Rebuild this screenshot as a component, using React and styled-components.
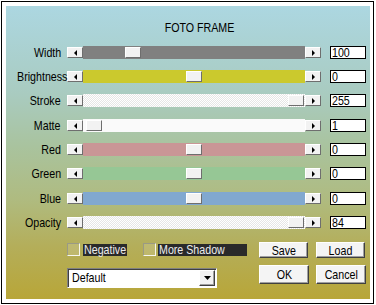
import React from 'react';
import styled, { createGlobalStyle } from 'styled-components';

const FONT = `"Liberation Sans", Arial, sans-serif`;

const Global = createGlobalStyle`
  html, body { margin: 0; padding: 0; background: #fff; }
  body { font-family: ${FONT}; }
`;

const Frame = styled.div`
  margin: 1px 0 0 1px;
  width: 373px;
  height: 303px;
  box-sizing: border-box;
  border: 1px solid #000;
  padding: 4px 3px 4px 4px;
  background: #fff;
`;

const Panel = styled.div`
  height: 100%;
  display: flex;
  flex-direction: column;
  font-family: ${FONT};
  font-size: 13px;
  color: #000;
  background: linear-gradient(
    to bottom,
    #acd7e1 0%,
    #a9cbc0 30%,
    #a9c39e 48%,
    #afbb80 66%,
    #b4ae5a 82%,
    #b8a638 100%
  );
`;

/* narrow MS-Sans-like text: regular face squeezed horizontally */
const Narrow = styled.span`
  display: inline-block;
  white-space: nowrap;
  transform: scaleX(0.82);
  transform-origin: ${p => p.$o || 'left'} center;
`;

const Title = styled.div`
  margin-top: 14px;
  height: 15px;
  line-height: 15px;
  text-align: center;
  padding-left: 23px;
`;

const Rows = styled.div`
  margin-top: 11px;
  display: grid;
  grid-template-columns: 55px 254px 36px;
  grid-template-rows: 24px 24px 25px 24px 24px 25px 24px 13px;
  column-gap: 6px;
  align-items: start;
`;

const Label = styled.div`
  text-align: right;
  height: 13px;
  line-height: 13px;
  white-space: nowrap;
`;

const ScrollBar = styled.div`
  display: flex;
  align-items: center;
  height: 13px;
`;

const ScrollBtn = styled.div`
  flex: none;
  width: 16px;
  height: 11px;
  box-sizing: border-box;
  background: #f2f2f2;
  border-style: solid;
  border-width: 1px;
  border-color: #fff #6e6e6e #6e6e6e #fff;
  display: flex;
  align-items: center;
  justify-content: center;
`;

const Track = styled.div`
  position: relative;
  flex: 1;
  height: 13px;
  background: ${p =>
    p.$pattern
      ? 'repeating-conic-gradient(#ffffff 0 25%, #e6e6e6 0 50%) 0 0 / 2px 2px'
      : p.$fill};
`;

const Thumb = styled.div`
  position: absolute;
  top: 1px;
  width: 16px;
  height: 11px;
  box-sizing: border-box;
  background: #f2f2f2;
  border-style: solid;
  border-width: 1px;
  border-color: #fff #6e6e6e #6e6e6e #fff;
`;

const ValueBox = styled.div`
  margin-left: 3px;
  width: 36px;
  height: 13px;
  box-sizing: border-box;
  border: 1px solid #000;
  background: #fff;
  padding-left: 1px;
  line-height: 11px;
`;

const Bottom = styled.div`
  margin-top: 13px;
  display: flex;
  align-items: flex-start;
  padding-left: 61px;
  padding-right: 4px;
`;

const LeftCol = styled.div`
  display: flex;
  flex-direction: column;
`;

const CheckRow = styled.div`
  margin-top: 1px;
  display: flex;
  align-items: center;
  height: 13px;
`;

const CheckItem = styled.label`
  display: flex;
  align-items: center;
  width: ${p => (p.$w ? `${p.$w}px` : 'auto')};
  flex: none;
`;

const CheckBox = styled.span`
  display: block;
  flex: none;
  width: 13px;
  height: 13px;
  box-sizing: border-box;
  border-style: solid;
  border-width: 1px;
  border-color: #9a9a84 #f6f6ee #f6f6ee #9a9a84;
  background: rgba(255, 255, 255, 0.14);
  margin-right: ${p => p.$gap}px;
`;

const CheckText = styled.span`
  display: block;
  width: ${p => p.$w}px;
  background: #2a2a2a;
  color: #ececec;
  height: 12px;
  line-height: 12px;
  padding-left: 1px;
  box-sizing: border-box;
`;

const Select = styled.div`
  margin-top: 12px;
  width: 150px;
  height: 20px;
  box-sizing: border-box;
  display: flex;
  align-items: center;
  justify-content: space-between;
  background: #fff;
  border-style: solid;
  border-width: 1px;
  border-color: #808080 #ffffff #ffffff #808080;
  box-shadow: inset 1px 1px 0 #404040;
  padding: 1px 1px 1px 4px;
`;

const SelectText = styled.span`
  line-height: 16px;
`;

const SelectBtn = styled.div`
  width: 16px;
  height: 16px;
  box-sizing: border-box;
  background: #f2f2f2;
  border-style: solid;
  border-width: 1px;
  border-color: #fff #404040 #404040 #fff;
  box-shadow: inset -1px -1px 0 #a0a0a0;
  display: flex;
  align-items: center;
  justify-content: center;
`;

const ButtonGrid = styled.div`
  margin-left: auto;
  display: grid;
  grid-template-columns: 50px 50px;
  grid-template-rows: 16px 19px;
  column-gap: 7px;
  row-gap: 7px;
`;

const PushButton = styled.button`
  width: ${p => p.$w}px;
  height: 100%;
  margin: 0;
  padding: 0;
  box-sizing: border-box;
  font-family: ${FONT};
  font-size: 13px;
  color: #000;
  background: #f4f4f4;
  border-style: solid;
  border-width: 1px;
  border-color: #ffffff #404040 #404040 #ffffff;
  box-shadow: inset -1px -1px 0 #a0a0a0;
  line-height: 1;
  overflow: visible;
`;

const LeftArrow = () => (
  <svg width="3" height="6" viewBox="0 0 3 6">
    <polygon points="3,0 0,3 3,6" fill="#000" />
  </svg>
);
const RightArrow = () => (
  <svg width="3" height="6" viewBox="0 0 3 6">
    <polygon points="0,0 3,3 0,6" fill="#000" />
  </svg>
);
const DownArrow = () => (
  <svg width="7" height="4" viewBox="0 0 7 4">
    <polygon points="0,0 7,0 3.5,4" fill="#000" />
  </svg>
);

const rows = [
  { label: 'Width', fill: '#808080', pos: 42, value: '100' },
  { label: 'Brightness', fill: '#cbc92d', pos: 103, value: '0' },
  { label: 'Stroke', pattern: true, pos: 205, value: '255' },
  { label: 'Matte', fill: '#fafafa', pos: 3, value: '1' },
  { label: 'Red', fill: '#c99696', pos: 103, value: '0' },
  { label: 'Green', fill: '#96c795', pos: 103, value: '0' },
  { label: 'Blue', fill: '#81a8d0', pos: 103, value: '0' },
  { label: 'Opacity', pattern: true, pos: 205, value: '84' },
];

export default function App() {
  return (
    <>
      <Global />
      <Frame>
        <Panel>
          <Title><Narrow $o="center">FOTO FRAME</Narrow></Title>
          <Rows>
            {rows.map(r => (
              <React.Fragment key={r.label}>
                <Label><Narrow $o="right">{r.label}</Narrow></Label>
                <ScrollBar>
                  <ScrollBtn><LeftArrow /></ScrollBtn>
                  <Track $fill={r.fill} $pattern={r.pattern}>
                    <Thumb style={{ left: r.pos }} />
                  </Track>
                  <ScrollBtn><RightArrow /></ScrollBtn>
                </ScrollBar>
                <ValueBox><Narrow>{r.value}</Narrow></ValueBox>
              </React.Fragment>
            ))}
          </Rows>
          <Bottom>
            <LeftCol>
              <CheckRow>
                <CheckItem $w={76}>
                  <CheckBox $gap={3} />
                  <CheckText $w={44}><Narrow>Negative</Narrow></CheckText>
                </CheckItem>
                <CheckItem>
                  <CheckBox $gap={2} />
                  <CheckText $w={89}><Narrow>More Shadow</Narrow></CheckText>
                </CheckItem>
              </CheckRow>
              <Select>
                <SelectText><Narrow>Default</Narrow></SelectText>
                <SelectBtn><DownArrow /></SelectBtn>
              </Select>
            </LeftCol>
            <ButtonGrid>
              <PushButton $w={49}><Narrow $o="center">Save</Narrow></PushButton>
              <PushButton $w={49}><Narrow $o="center">Load</Narrow></PushButton>
              <PushButton $w={50}><Narrow $o="center">OK</Narrow></PushButton>
              <PushButton $w={50}><Narrow $o="center">Cancel</Narrow></PushButton>
            </ButtonGrid>
          </Bottom>
        </Panel>
      </Frame>
    </>
  );
}
